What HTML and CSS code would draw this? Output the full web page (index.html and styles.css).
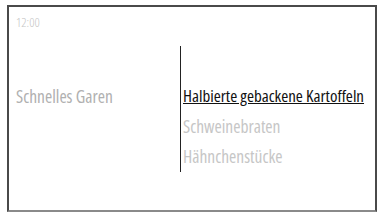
FILE: index.html
```html
<!DOCTYPE html>
<html lang="de">

<head>
    <meta charset="UTF-8">
    <meta name="viewport" content="width=device-width, initial-scale=1.0">
    <title>Garen</title>
    <link rel="stylesheet" href="styles.css">
</head>

<body>
    <div class="screen">
        <div class="clock">12:00</div>
        <div class="content">
            <div class="mode">Schnelles Garen</div>
            <div class="divider"></div>
            <ul class="list">
                <li class="active">Halbierte gebackene Kartoffeln</li>
                <li>Schweinebraten</li>
                <li>Hähnchenstücke</li>
            </ul>
        </div>
    </div>
</body>

</html>
```
FILE: styles.css
```css
body {
    margin: 0;
    background-color: #fff;
    font-family: "Open Sans", sans-serif;
    font-stretch: 75%;
}

.screen {
    box-sizing: border-box;
    margin: 5px 0 0 7px;
    width: 370px;
    height: 207px;
    border: 2px solid #4a4a4a;
    border-bottom-color: #8a8a8a;
}

.clock {
    height: 23px;
    padding: 7px 0 0 7px;
    font-size: 13px;
    line-height: 16px;
    font-weight: 300;
    color: #c6c6c6;
}

.content {
    display: flex;
    align-items: flex-start;
    margin-top: 8px;
}

.mode {
    flex-shrink: 0;
    box-sizing: border-box;
    width: 171px;
    padding: 36px 0 0 7px;
    font-size: 17.5px;
    line-height: 30px;
    color: #b0b0b0;
}

.divider {
    flex-shrink: 0;
    width: 1px;
    height: 126px;
    margin-top: 1px;
    background-color: #222;
}

.list {
    list-style: none;
    margin: 0;
    padding: 36px 0 0 2px;
    font-size: 17.5px;
    color: #c6c6c6;
    white-space: nowrap;
}

.list li {
    height: 30px;
    line-height: 30px;
}

.list .active {
    font-size: 17px;
    color: #111;
    text-decoration: underline;
    text-decoration-thickness: 1px;
}
```
